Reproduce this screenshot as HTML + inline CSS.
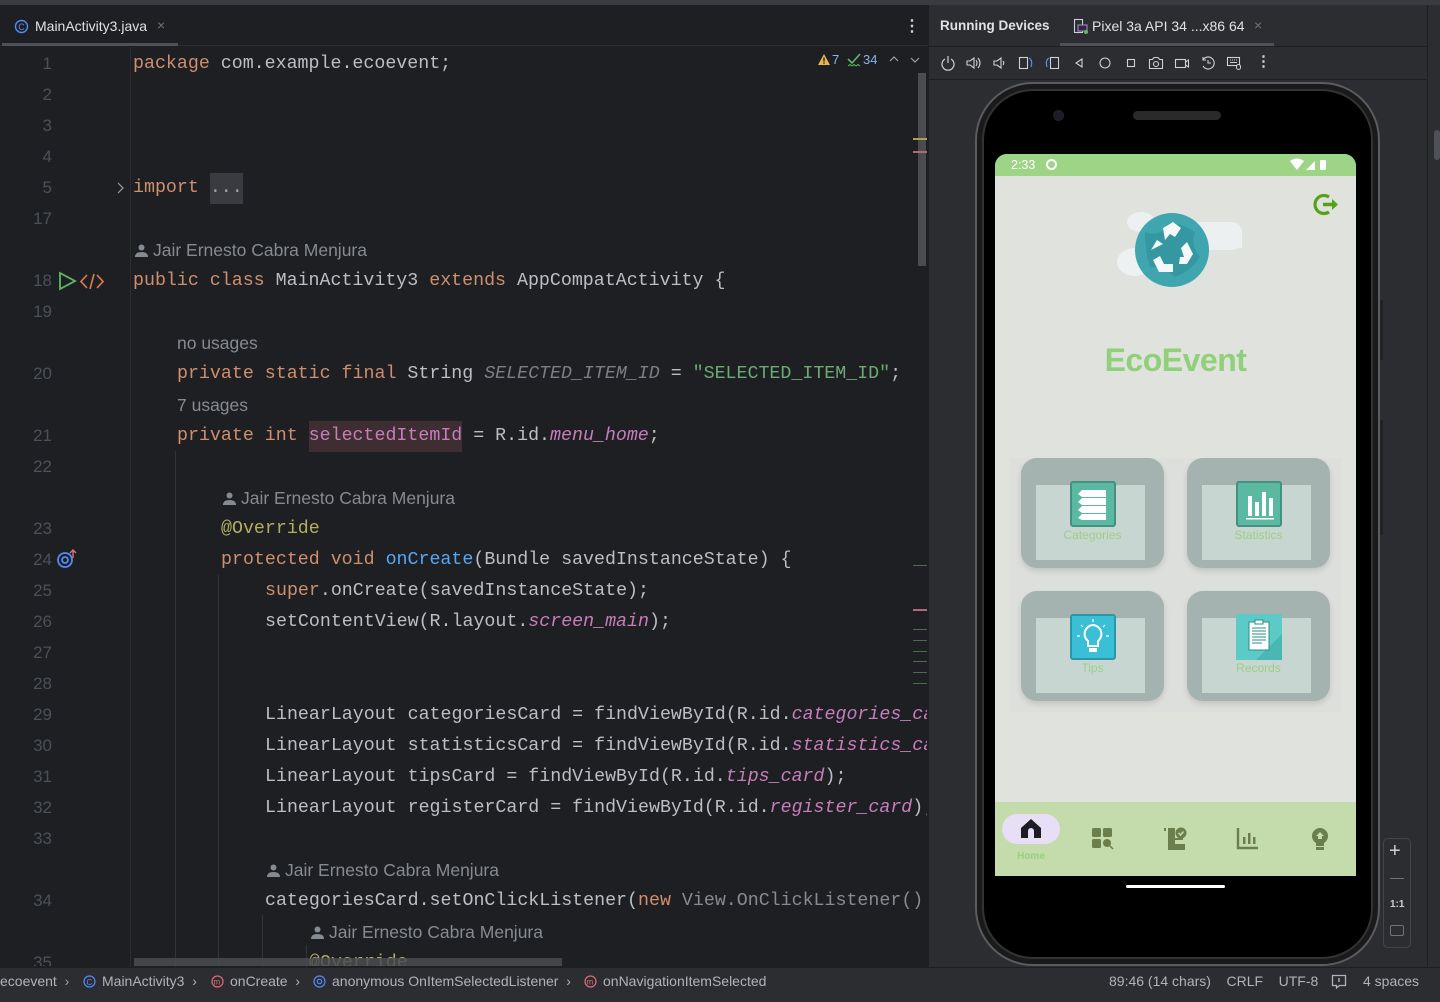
<!DOCTYPE html>
<html><head><meta charset="utf-8">
<style>
*{margin:0;padding:0;box-sizing:border-box}
body{width:1440px;height:1002px;background:#1e1f22;position:relative;overflow:hidden;font-family:"Liberation Sans",sans-serif}
.abs{position:absolute}
.code{position:absolute;font-family:"Liberation Mono",monospace;font-size:18.3px;color:#bcbec4;white-space:pre;line-height:22px}
.ln{position:absolute;width:52px;text-align:right;font-size:17px;color:#4b5059;line-height:22px}
.hint{position:absolute;font-size:17.5px;color:#868a91;line-height:22px;white-space:pre}
.hint svg{vertical-align:-1px;margin-right:5px}
.k{color:#cf8e6d}.s{color:#6aab73}.p{color:#c77dbb;font-style:italic}.g{color:#7a7e85;font-style:italic}.a{color:#b3ae60}.m{color:#56a8f5}.h{color:#868a91}
.guide{position:absolute;width:1px;background:#313438}
.card{position:absolute;width:143px;height:110px;border-radius:16px;background:#a5b3b0;box-shadow:0 3px 6px rgba(0,0,0,.12)}
.card .in{position:absolute;left:15px;top:27px;width:109px;height:75px;background:#c8d6d2}
.card .lbl{position:absolute;left:0;width:143px;top:70px;text-align:center;font-size:12px;color:#9ccf86}
.ico{position:absolute;left:49px;top:23px;width:46px;height:46px;border-radius:3px}
.tb svg{position:absolute;top:55px}
</style></head><body>
<div class="abs" style="left:0;top:0;width:1440px;height:5px;background:#393b40"></div>
<div class="abs" style="left:0;top:5px;width:928px;height:41px;background:#1e1f22;border-bottom:1px solid #2b2d30"></div>
<div class="abs" style="left:2px;top:43px;width:176px;height:3px;background:#4e5157"></div>
<svg class="abs" style="left:14px;top:19px" width="15" height="15"><circle cx="7.5" cy="7.5" r="6" fill="none" stroke="#548af7" stroke-width="1.4"/><text x="4.3" y="11" font-size="9" fill="#548af7" font-family="Liberation Sans">C</text></svg>
<div class="abs" style="left:35px;top:18px;font-size:14px;color:#dfe1e5">MainActivity3.java</div>
<div class="abs" style="left:157px;top:17px;font-size:14px;color:#6f737a">×</div>
<div class="abs" style="left:904px;top:16px;font-size:16px;color:#ced0d6;font-weight:bold">⋮</div>

<svg class="abs" style="left:817px;top:53px" width="14" height="13"><path d="M7 1L13 12H1Z" fill="#e6b450"/><rect x="6.3" y="4.5" width="1.4" height="4" fill="#1e1f22"/><rect x="6.3" y="9.3" width="1.4" height="1.4" fill="#1e1f22"/></svg>
<div class="abs" style="left:832px;top:52px;font-size:13px;color:#8ab4e8">7</div>
<svg class="abs" style="left:847px;top:53px" width="14" height="14"><path d="M1 6l4 4 8-9" fill="none" stroke="#5fb865" stroke-width="1.6"/><path d="M1 13l2-1.5 2 1.5 2-1.5 2 1.5 2-1.5 2 1.5" fill="none" stroke="#5fb865" stroke-width="1"/></svg>
<div class="abs" style="left:863px;top:52px;font-size:13px;color:#8ab4e8">34</div>
<svg class="abs" style="left:889px;top:56px" width="10" height="6"><path d="M1 5l4-4 4 4" fill="none" stroke="#9da0a8" stroke-width="1.2"/></svg>
<svg class="abs" style="left:910px;top:57px" width="10" height="6"><path d="M1 1l4 4 4-4" fill="none" stroke="#9da0a8" stroke-width="1.2"/></svg>
<div class="abs" style="left:918px;top:73px;width:8px;height:193px;background:#4a4c50"></div>
<div class="abs" style="left:913px;top:138px;width:14px;height:2px;background:#b59c4c"></div>
<div class="abs" style="left:913px;top:151px;width:14px;height:2px;background:#b5667a"></div>
<div class="abs" style="left:913px;top:565px;width:14px;height:1px;background:#4d6b4d"></div>
<div class="abs" style="left:913px;top:609px;width:14px;height:2px;background:#b5667a"></div>
<div class="abs" style="left:913px;top:629px;width:14px;height:1px;background:#4d6b4d"></div>
<div class="abs" style="left:913px;top:640px;width:14px;height:1px;background:#4d6b4d"></div>
<div class="abs" style="left:913px;top:651px;width:14px;height:1px;background:#4d6b4d"></div>
<div class="abs" style="left:913px;top:661px;width:14px;height:1px;background:#4d6b4d"></div>
<div class="abs" style="left:913px;top:672px;width:14px;height:1px;background:#4d6b4d"></div>
<div class="abs" style="left:913px;top:683px;width:14px;height:1px;background:#4d6b4d"></div>

<div class="guide" style="left:130px;top:47px;height:920px;background:#2b2d30"></div>
<div class="guide" style="left:175px;top:451px;height:516px"></div>
<div class="guide" style="left:218px;top:575px;height:392px"></div>
<div class="guide" style="left:262px;top:915px;height:52px"></div>
<div class="guide" style="left:306px;top:945px;height:22px"></div>

<div class="abs" style="left:0;top:2px;width:927px;height:964px;overflow:hidden">
<div class="ln" style="left:0;top:51px">1</div>
<div class="ln" style="left:0;top:82px">2</div>
<div class="ln" style="left:0;top:113px">3</div>
<div class="ln" style="left:0;top:144px">4</div>
<div class="ln" style="left:0;top:175px">5</div>
<div class="ln" style="left:0;top:206px">17</div>
<div class="ln" style="left:0;top:268px">18</div>
<div class="ln" style="left:0;top:299px">19</div>
<div class="ln" style="left:0;top:361px">20</div>
<div class="ln" style="left:0;top:423px">21</div>
<div class="ln" style="left:0;top:454px">22</div>
<div class="ln" style="left:0;top:516px">23</div>
<div class="ln" style="left:0;top:547px">24</div>
<div class="ln" style="left:0;top:578px">25</div>
<div class="ln" style="left:0;top:609px">26</div>
<div class="ln" style="left:0;top:640px">27</div>
<div class="ln" style="left:0;top:671px">28</div>
<div class="ln" style="left:0;top:702px">29</div>
<div class="ln" style="left:0;top:733px">30</div>
<div class="ln" style="left:0;top:764px">31</div>
<div class="ln" style="left:0;top:795px">32</div>
<div class="ln" style="left:0;top:826px">33</div>
<div class="ln" style="left:0;top:888px">34</div>
<div class="ln" style="left:0;top:950px">35</div>

<svg class="abs" style="left:116px;top:180px" width="8" height="12"><path d="M2 1l5 5-5 5" fill="none" stroke="#9da0a8" stroke-width="1.2"/></svg>
<svg class="abs" style="left:58px;top:269px" width="19" height="20"><path d="M2 2L17 10L2 18Z" fill="none" stroke="#5fb865" stroke-width="1.8"/></svg>
<svg class="abs" style="left:80px;top:271px" width="24" height="17"><path d="M7 2L1 8.5 7 15M17 2l6 6.5-6 6.5M14 1L10 16" fill="none" stroke="#e07b53" stroke-width="1.6"/></svg>
<svg class="abs" style="left:56px;top:547px" width="22" height="20"><circle cx="9" cy="11" r="7" fill="none" stroke="#548af7" stroke-width="1.8"/><circle cx="9" cy="11" r="3" fill="none" stroke="#548af7" stroke-width="1.8"/><path d="M17 9V1M14 4l3-3 3 3" fill="none" stroke="#e06c75" stroke-width="1.4"/></svg>

<div class="code" style="left:133px;top:51px"><span class="k">package</span> com.example.ecoevent;</div>
<div class="code" style="left:133px;top:175px"><span class="k">import</span> <span style="background:#393b40;color:#9da0a8;display:inline-block;line-height:31px;margin:-5px 0">...</span></div>
<div class="hint" style="left:135px;top:237px"><svg width="13" height="13"><circle cx="6.5" cy="3.5" r="3" fill="#868a91"/><path d="M0 13q0-5 6.5-5t6.5 5z" fill="#868a91"/></svg>Jair Ernesto Cabra Menjura</div>
<div class="code" style="left:133px;top:268px"><span class="k">public class</span> MainActivity3 <span class="k">extends</span> AppCompatActivity {</div>
<div class="hint" style="left:177px;top:330px">no usages</div>
<div class="code" style="left:177px;top:361px"><span class="k">private static final</span> String <span class="g">SELECTED_ITEM_ID</span> = <span class="s">"SELECTED_ITEM_ID"</span>;</div>
<div class="hint" style="left:177px;top:392px">7 usages</div>
<div class="code" style="left:177px;top:423px"><span class="k">private int</span> <span style="background:#3f2e31;color:#c77dbb;display:inline-block;line-height:31px;margin:-5px 0">selectedItemId</span> = R.id.<span class="p">menu_home</span>;</div>
<div class="hint" style="left:223px;top:485px"><svg width="13" height="13"><circle cx="6.5" cy="3.5" r="3" fill="#868a91"/><path d="M0 13q0-5 6.5-5t6.5 5z" fill="#868a91"/></svg>Jair Ernesto Cabra Menjura</div>
<div class="code" style="left:221px;top:516px"><span class="a">@Override</span></div>
<div class="code" style="left:221px;top:547px"><span class="k">protected void</span> <span class="m">onCreate</span>(Bundle savedInstanceState) {</div>
<div class="code" style="left:265px;top:578px"><span class="k">super</span>.onCreate(savedInstanceState);</div>
<div class="code" style="left:265px;top:609px">setContentView(R.layout.<span class="p">screen_main</span>);</div>
<div class="code" style="left:265px;top:702px">LinearLayout categoriesCard = findViewById(R.id.<span class="p">categories_card</span>);</div>
<div class="code" style="left:265px;top:733px">LinearLayout statisticsCard = findViewById(R.id.<span class="p">statistics_card</span>);</div>
<div class="code" style="left:265px;top:764px">LinearLayout tipsCard = findViewById(R.id.<span class="p">tips_card</span>);</div>
<div class="code" style="left:265px;top:795px">LinearLayout registerCard = findViewById(R.id.<span class="p">register_card</span>);</div>
<div class="hint" style="left:267px;top:857px"><svg width="13" height="13"><circle cx="6.5" cy="3.5" r="3" fill="#868a91"/><path d="M0 13q0-5 6.5-5t6.5 5z" fill="#868a91"/></svg>Jair Ernesto Cabra Menjura</div>
<div class="code" style="left:265px;top:888px">categoriesCard.setOnClickListener(<span class="k">new</span> <span class="h">View.OnClickListener()</span> {</div>
<div class="hint" style="left:311px;top:919px"><svg width="13" height="13"><circle cx="6.5" cy="3.5" r="3" fill="#868a91"/><path d="M0 13q0-5 6.5-5t6.5 5z" fill="#868a91"/></svg>Jair Ernesto Cabra Menjura</div>
<div class="code" style="left:309px;top:950px"><span class="a">@Override</span></div>
</div>
<div class="abs" style="left:134px;top:958px;width:428px;height:8px;background:#4a4c50;opacity:.85"></div>

<div class="abs" style="left:928px;top:5px;width:512px;height:962px;background:#2b2d30;border-left:1px solid #1e1f22"></div>
<div class="abs" style="left:1427px;top:5px;width:1px;height:962px;background:#1e1f22"></div>
<div class="abs" style="left:1434px;top:130px;width:6px;height:30px;background:#4e5157;border-radius:3px"></div>
<div class="abs" style="left:928px;top:46px;width:500px;height:1px;background:#1e1f22"></div>
<div class="abs" style="left:928px;top:79px;width:500px;height:1px;background:#1e1f22"></div>
<div class="abs" style="left:940px;top:18px;font-size:13.5px;color:#dfe1e5;font-weight:bold">Running Devices</div>
<svg class="abs" style="left:1073px;top:18px" width="16" height="17"><rect x="1.5" y="1.5" width="8" height="13" fill="none" stroke="#ced0d6" stroke-width="1.1"/><rect x="5" y="7" width="9" height="6" fill="#2b2d30" stroke="#b07be8" stroke-width="1.1"/><circle cx="13" cy="14" r="2" fill="#5fb865"/></svg>
<div class="abs" style="left:1092px;top:18px;font-size:14px;color:#dfe1e5">Pixel 3a API 34 ...x86 64</div>
<div class="abs" style="left:1254px;top:17px;font-size:14px;color:#6f737a">×</div>
<div class="abs" style="left:1060px;top:43px;width:214px;height:3px;background:#4e5157"></div>

<div class="tb">
<svg style="left:940px" width="16" height="16"><path d="M5 4a6 6 0 1 0 6 0M8 1v7" fill="none" stroke="#ced0d6" stroke-width="1.2"/></svg>
<svg style="left:965px" width="16" height="16"><path d="M2 6h3l4-3v10l-4-3H2z M11 5q2 3 0 6M13 3q4 5 0 10" fill="none" stroke="#ced0d6" stroke-width="1.1"/></svg>
<svg style="left:991px" width="16" height="16"><path d="M3 6h3l4-3v10l-4-3H3z M12 6q1.5 2 0 4" fill="none" stroke="#ced0d6" stroke-width="1.1"/></svg>
<svg style="left:1018px" width="16" height="16"><rect x="1.5" y="2.5" width="8" height="11" fill="none" stroke="#ced0d6" stroke-width="1.1"/><path d="M11 3q4 2 2 9" fill="none" stroke="#548af7" stroke-width="1.2"/></svg>
<svg style="left:1044px" width="16" height="16"><rect x="6.5" y="2.5" width="8" height="11" fill="none" stroke="#ced0d6" stroke-width="1.1"/><path d="M5 3q-4 2-2 9" fill="none" stroke="#548af7" stroke-width="1.2"/></svg>
<svg style="left:1071px" width="16" height="16"><path d="M11 4L5 8l6 4z" fill="none" stroke="#ced0d6" stroke-width="1.1"/></svg>
<svg style="left:1097px" width="16" height="16"><circle cx="8" cy="8" r="5" fill="none" stroke="#ced0d6" stroke-width="1.1"/></svg>
<svg style="left:1123px" width="16" height="16"><rect x="4.5" y="4.5" width="7" height="7" fill="none" stroke="#ced0d6" stroke-width="1.1"/></svg>
<svg style="left:1148px" width="16" height="16"><path d="M1.5 4.5h3l1.5-2h4l1.5 2h3v9h-13z" fill="none" stroke="#ced0d6" stroke-width="1.1"/><circle cx="8" cy="9" r="2.5" fill="none" stroke="#ced0d6" stroke-width="1.1"/></svg>
<svg style="left:1174px" width="16" height="16"><rect x="1.5" y="4.5" width="10" height="8" fill="none" stroke="#ced0d6" stroke-width="1.1"/><path d="M11.5 7l3-2v7l-3-2" fill="none" stroke="#ced0d6" stroke-width="1.1"/></svg>
<svg style="left:1200px" width="16" height="16"><path d="M3 5a6 6 0 1 1 0 6M3 2v3h3M8 5v3h3" fill="none" stroke="#ced0d6" stroke-width="1.1"/></svg>
<svg style="left:1226px" width="16" height="16"><rect x="1.5" y="2.5" width="12" height="8" fill="none" stroke="#ced0d6" stroke-width="1.1"/><path d="M4 5h1M6 5h1M8 5h1M10 5h1M4 7.5h7" stroke="#ced0d6"/><rect x="10.5" y="9.5" width="4" height="5" rx="2" fill="#2b2d30" stroke="#ced0d6"/></svg>
<div style="position:absolute;left:1256px;top:52px;font-size:15px;color:#ced0d6;font-weight:bold">⋮</div>
</div>

<div class="abs" style="left:975px;top:82px;width:405px;height:884px;border-radius:58px;background:#000;border:2px solid #5a5c60;box-shadow:inset 0 0 0 5px #1a1a1a,inset 0 0 0 7px #333"></div>
<div class="abs" style="left:1380px;top:300px;width:3px;height:60px;background:#222"></div>
<div class="abs" style="left:1380px;top:420px;width:3px;height:115px;background:#222"></div>
<div class="abs" style="left:1053px;top:110px;width:11px;height:11px;border-radius:50%;background:#1b1d2e;border:1px solid #222"></div>
<div class="abs" style="left:1133px;top:111px;width:88px;height:9px;border-radius:5px;background:#2a2a2a"></div>
<div class="abs" style="left:995px;top:154px;width:361px;height:722px;background:#e0e2de;border-radius:12px 12px 0 0;overflow:hidden">
  <div class="abs" style="left:0;top:0;width:361px;height:22px;background:#9ed485"></div>
  <div class="abs" style="left:16px;top:4px;font-size:12.5px;color:#fff">2:33</div>
  <div class="abs" style="left:51px;top:5px;width:11px;height:11px;border-radius:50%;border:2px solid #fff"></div>
  <svg class="abs" style="left:294px;top:4px" width="46" height="14"><path d="M1 3q7-5 14 0l-7 9z" fill="#fff"/><path d="M17 12L26 3v9z" fill="#fff"/><rect x="31" y="2" width="6" height="10" rx="1" fill="#fff"/></svg>
  <svg class="abs" style="left:317px;top:38px" width="30" height="26"><path d="M17 5a9 9 0 1 0 0 15" fill="none" stroke="#56a11a" stroke-width="3.2"/><path d="M11 12.5h11" stroke="#56a11a" stroke-width="3.5"/><path d="M20 7l6 5.5-6 5.5z" fill="#56a11a"/></svg>
  <svg class="abs" style="left:120px;top:48px" width="130" height="90">
    <g fill="#eef3f5" opacity=".85"><ellipse cx="26" cy="20" rx="14" ry="10"/><rect x="70" y="20" width="57" height="28" rx="10"/><ellipse cx="20" cy="60" rx="18" ry="14"/><rect x="100" y="30" width="27" height="16"/></g>
    <circle cx="57" cy="48" r="37" fill="#3fa6b0"/>
    <path d="M30 30q15 5 20-5t30 5q-5 15 5 25q-10 15-25 20q-10-10-25-10q-5-15-5-35z" fill="#2f8d98" opacity=".6"/>
    <g fill="#f4f8f8">
      <path d="M48 26l10-6 8 6-6 9-5-3-5 6z"/>
      <path d="M72 40l6 12-6 10h-8l1-7 4 0-3-9z"/>
      <path d="M58 70H44l-6-12 7-4 4 8h9z"/>
      <path d="M36 48l6-10 6 4z"/>
    </g>
  </svg>
  <div class="abs" style="left:0;width:361px;top:188px;text-align:center;font-size:32px;font-weight:bold;color:#91d07a;letter-spacing:-.5px">EcoEvent</div>
  <div class="abs" style="left:15px;top:304px;width:331px;height:254px;background:#dcdfdb"></div>
  <div class="card" style="left:26px;top:304px"><div class="in"></div>
    <div class="ico" style="background:#5bb8a2;border:2px solid #43927f"><svg width="42" height="42"><g fill="#fff"><path d="M6 11l4-4h24v7H10z"/><path d="M6 19l4-4h24v7H10z"/><path d="M6 27l4-4h24v7H10z"/><path d="M6 35l4-4h24v6H10z"/></g></svg></div>
    <div class="lbl">Categories</div></div>
  <div class="card" style="left:192px;top:304px"><div class="in"></div>
    <div class="ico" style="background:#5bb8a2;border:2px solid #43927f"><svg width="42" height="42"><g fill="#fff"><rect x="10" y="13" width="4" height="20"/><rect x="17" y="19" width="4" height="14"/><rect x="24" y="9" width="4" height="24"/><rect x="31" y="15" width="4" height="18"/><rect x="8" y="35" width="28" height="1.5"/></g></svg></div>
    <div class="lbl">Statistics</div></div>
  <div class="card" style="left:26px;top:437px"><div class="in"></div>
    <div class="ico" style="background:#3bbfd6;border:2px solid #2a97a8"><svg width="42" height="42"><path d="M21 9a9 9 0 0 0-5 16v5h10v-5a9 9 0 0 0-5-16z" fill="none" stroke="#fff" stroke-width="2"/><rect x="17" y="32" width="8" height="4" fill="#fff"/><g stroke="#fff" stroke-width="1.2"><path d="M21 3v3M9 9l2 2M33 9l-2 2M5 20h3M34 20h3"/></g></svg></div>
    <div class="lbl">Tips</div></div>
  <div class="card" style="left:192px;top:437px"><div class="in"></div>
    <div class="ico" style="background:#5ccac6;border-radius:0;left:49px"><svg width="46" height="46"><path d="M20 46L46 20V46z" fill="#49b7b3"/><rect x="13" y="8" width="20" height="28" fill="#fff" stroke="#2a8d8a" stroke-width="1"/><rect x="19" y="6" width="8" height="4" fill="#fff" stroke="#2a8d8a"/><g stroke="#2a8d8a" stroke-width="1"><path d="M16 14h14M16 17h14M16 20h14M16 23h14M16 26h14M16 29h10"/></g></svg></div>
    <div class="lbl">Records</div></div>
  <div class="abs" style="left:0;top:648px;width:361px;height:74px;background:#c4dbab"></div>
  <div class="abs" style="left:7px;top:660px;width:58px;height:30px;border-radius:15px;background:#e6dff5"></div>
  <svg class="abs" style="left:24px;top:662px" width="24" height="24"><path d="M12 3L2 12v10h7v-7a3 3 0 0 1 6 0v7h7V12z" fill="#1d1b24"/></svg>
  <div class="abs" style="left:7px;top:697px;width:58px;text-align:center;font-size:10px;font-weight:bold;color:#97d07e">Home</div>
  <svg class="abs" style="left:96px;top:673px" width="24" height="24"><g fill="#6b7f4c"><rect x="1" y="1" width="9" height="9" rx="1.5"/><rect x="12" y="1" width="9" height="9" rx="1.5"/><rect x="1" y="12" width="9" height="9" rx="1.5"/><circle cx="16" cy="16" r="4"/><path d="M18 18l4 4" stroke="#6b7f4c" stroke-width="1.5"/></g></svg>
  <svg class="abs" style="left:168px;top:672px" width="26" height="26"><g fill="#6b7f4c"><rect x="1" y="2" width="2" height="3"/><path d="M5 2h7v22H5z"/><path d="M12 12h8v2h-8zM12 18h10v6H12z"/><circle cx="18" cy="7" r="5.5"/></g><path d="M15.5 7l2 2 3-3.5" fill="none" stroke="#c4dbab" stroke-width="1.5"/></svg>
  <svg class="abs" style="left:241px;top:673px" width="24" height="24"><path d="M2 1v20h20" fill="none" stroke="#6b7f4c" stroke-width="2.4"/><g fill="#6b7f4c"><rect x="7" y="10" width="2.5" height="7"/><rect x="12" y="6" width="2.5" height="11"/><rect x="17" y="10" width="2.5" height="7"/></g></svg>
  <svg class="abs" style="left:314px;top:673px" width="22" height="24"><circle cx="11" cy="9" r="8" fill="#6b7f4c"/><path d="M7 14h8v5H7z" fill="#6b7f4c"/><rect x="7" y="20" width="8" height="3" fill="#6b7f4c"/><path d="M7 9l4-4 4 4h-2v3H9V9z" fill="#c4dbab"/></svg>
</div>
<div class="abs" style="left:1126px;top:885px;width:99px;height:3px;border-radius:2px;background:#fff"></div>

<div class="abs" style="left:1383px;top:838px;width:28px;height:110px;border:1px solid #43454a;border-radius:5px"></div>
<div class="abs" style="left:1389px;top:840px;font-size:20px;color:#ced0d6">+</div>
<div class="abs" style="left:1390px;top:878px;width:14px;height:1px;background:#6f737a"></div>
<div class="abs" style="left:1390px;top:899px;font-size:10px;color:#ced0d6;font-weight:bold">1:1</div>
<div class="abs" style="left:1390px;top:925px;width:14px;height:11px;border:1px solid #6f737a;border-radius:2px"></div>

<div class="abs" style="left:0;top:967px;width:1440px;height:35px;background:#2b2d30;border-top:1px solid #1e1f22"></div>
<div class="abs" style="left:0;top:973px;font-size:14px;color:#b0b3b9;white-space:nowrap">ecoevent&nbsp; <span style="color:#9da0a8">›</span>&nbsp;</div>
<svg class="abs" style="left:83px;top:975px" width="13" height="13"><circle cx="6.5" cy="6.5" r="5.5" fill="none" stroke="#548af7" stroke-width="1.2"/><text x="3.5" y="9.8" font-size="8" fill="#548af7">C</text></svg>
<div class="abs" style="left:102px;top:973px;font-size:14px;color:#b0b3b9">MainActivity3&nbsp; ›</div>
<svg class="abs" style="left:211px;top:975px" width="13" height="13"><circle cx="6.5" cy="6.5" r="5.5" fill="none" stroke="#e06c75" stroke-width="1.2"/><text x="2.5" y="9.5" font-size="8" fill="#e06c75">m</text></svg>
<div class="abs" style="left:230px;top:973px;font-size:14px;color:#b0b3b9">onCreate&nbsp; ›</div>
<svg class="abs" style="left:313px;top:975px" width="13" height="13"><circle cx="6.5" cy="6.5" r="5.5" fill="none" stroke="#548af7" stroke-width="1.2"/><circle cx="6.5" cy="6.5" r="2.2" fill="none" stroke="#548af7" stroke-width="1.2"/></svg>
<div class="abs" style="left:332px;top:973px;font-size:14px;color:#b0b3b9">anonymous OnItemSelectedListener&nbsp; ›</div>
<svg class="abs" style="left:584px;top:975px" width="13" height="13"><circle cx="6.5" cy="6.5" r="5.5" fill="none" stroke="#e06c75" stroke-width="1.2"/><text x="2.5" y="9.5" font-size="8" fill="#e06c75">m</text></svg>
<div class="abs" style="left:603px;top:973px;font-size:14px;color:#b0b3b9">onNavigationItemSelected</div>
<div class="abs" style="left:1109px;top:973px;font-size:14px;color:#b0b3b9;white-space:nowrap">89:46 (14 chars)&nbsp;&nbsp;&nbsp; CRLF&nbsp;&nbsp;&nbsp; UTF-8</div>
<svg class="abs" style="left:1331px;top:974px" width="16" height="15"><path d="M1.5 1.5h13v10h-6l-3 2.5v-2.5h-4z" fill="none" stroke="#b0b3b9" stroke-width="1.3"/><path d="M8 4v4" stroke="#b0b3b9" stroke-width="1.4"/></svg>
<div class="abs" style="left:1363px;top:973px;font-size:14px;color:#b0b3b9">4 spaces</div>
</body></html>
